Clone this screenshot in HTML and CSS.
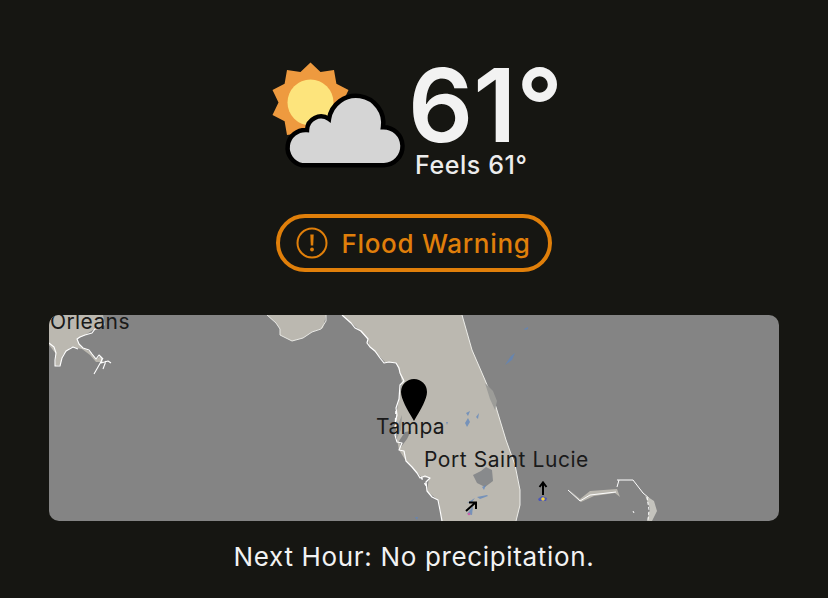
FILE: index.html
```html
<!DOCTYPE html>
<html lang="en">
 <head>
  <meta charset="utf-8">
  <meta name="viewport" content="width=device-width, initial-scale=1.0">
  <title>Weather</title>
  <link rel="stylesheet" href="styles.css">
 </head>
 <body>
  <div class="current">
   <svg class="wxicon" viewBox="268 60 140 112" width="140" height="112">
    <g transform="translate(309.500 102.500)">
     <polygon fill="#ee9a3f" points="0,-40 10,-30.500 23.500,-32.400 25.900,-18.800 38,-12.400 32,0 38,12.400 25.900,18.800 23.500,32.400 10,30.500 0,40 -10,30.500 -23.500,32.400 -25.900,18.800 -38,12.400 -32,0 -38,-12.400 -25.900,-18.800 -23.500,-32.400 -10,-30.500"/>
     <circle r="23" fill="#fde47c"/>
    </g>
    <path fill="#d5d5d5" stroke="#000" stroke-width="4.500" d="M301 165.200 H383 A19 19 0 0 0 382 127.200 A27.200 27.200 0 0 0 328 119 A14 14 0 0 0 306 130 A17.800 17.800 0 0 0 301 165.200 Z"/>
   </svg>
   <div class="temps">
    <div class="temp">61°</div>
    <div class="feels">Feels 61°</div>
   </div>
  </div>

  <div class="alert">
   <svg viewBox="0 0 32 32" width="32" height="32">
    <circle cx="16" cy="16" r="14.500" fill="none" stroke="#e07f0a" stroke-width="2"/>
    <path fill="#e07f0a" d="M14.300 7.500 h3.400 l-.5 11 h-2.400 z"/>
    <circle cx="16" cy="22.500" r="1.900" fill="#e07f0a"/>
   </svg>
   <span>Flood Warning</span>
  </div>

  <div class="map">
   <svg viewBox="0 0 730 206" width="730" height="206">
    <!-- louisiana -->
    <path fill="#bbb8b0" d="M0 0 H54 L56 10 L50 14 L44 15 L36 20 L28 24 L32 32 L42 37 L47 44 L52 41 L54 47 L47 47 L41 40 L33 34 L22 32 L14 40 L11 50 L6 51 L7 39 L0 30 Z"/>
    <path fill="none" stroke="#fff" stroke-width="1.100" stroke-linejoin="round" d="M52 13 L46 14 L43 18 L36 20 L31 22 L28 24 L30 29 L34 33 L40 35 L43 39 L47 44 L50 40 L53 43 L52 48 L59 46 L62 48 M54 43 L49 52 L45 59 M57 46 L54 54 M0 28 L5 32 L7 38 L6 45 L6 51 L11 51 L13 43 L17 36 L24 32 L29 34"/>
    <!-- panhandle -->
    <path fill="#bbb8b0" d="M218 0 L227 8 L231 14 L231 20 L243 26 L254 23 L263 17 L274 13 L277 0 Z"/>
    <path fill="none" stroke="#e8e8e4" stroke-width="1" d="M218 0 L227 8 L231 14 L231 20 L243 26 L254 23 L263 17 L272 14 L277 6 L277 0"/>
    <!-- peninsula -->
    <path fill="#bbb8b0" d="M293 0 L308 13 L319 24 L320 31 L336 47 L347 48 L351 58 L353 67 L350 84 L347 100 L347 120 L350 135 L357 146 L368 158 L372 162 L380 163 L378 176 L390 186 L393 206 H467 L471 190 L471 175 L466 150 L457 125 L447 92 L436 65 L423 35 L413 0 Z"/>
    <path fill="#848484" d="M350 126 L356 117 L362 116 L358 124 L352 132 Z"/>
    <path fill="none" stroke="#fff" stroke-width="1.200" stroke-linejoin="round" d="M293 0 L302 8 L306 13 L312 16 L319 24 L318 28 L321 32 L326 36 L331 43 L335 48 L340 47 L347 48 L350 53 L351 58 L355 66 L351 70 L350 84 L347 93 L348 100 L346 108 L349 112 L346 120 L348 127 L353 128 L350 135 L355 136 L357 146 L363 152 L368 158 L371 163 L376 161 L381 163 L377 167 L378 176 L383 182 L389 185 L391 195 L393 206"/>
    <path fill="none" stroke="#fff" stroke-width="1.500" stroke-dasharray="3 4" d="M347 96 L346 118 M372 162 L378 172"/>
    <path fill="none" stroke="#eeeeea" stroke-width="1" d="M413 0 L423 35 L436 65 L447 92 L457 125 L466 150 L471 175 L471 190 L467 206"/>
    <path fill="#9c9c99" d="M348 112 L353 100 L352 115 L347 125 Z"/>
    <path fill="#9c9c99" d="M436 68 L444 76 L448 86 L446 95 L441 84 Z"/>
    <!-- okeechobee -->
    <path fill="#888a8c" d="M424 160 L432 156 L437 152 L443 155 L444 166 L436 172 L428 168 Z"/>
    <!-- bahamas -->
    <path fill="#bbb8b0" d="M520 175 L531 184 L541 176 L568 174 L571 182 L566 178 L545 181 L532 187 Z"/>
    <path fill="none" stroke="#fff" stroke-width="1" d="M519 175 L531 186 L541 180 L567 177 M568 165 L584 165 L594 178 L600 183 M570 165 L568 172"/>
    <path fill="#c4c3bd" d="M596 180 L605 186 L608 196 L603 206 H598 L601 194 Z"/>
    <path fill="none" stroke="#fff" stroke-width="1" stroke-dasharray="3 2" d="M598 182 L600 195 L599 205 M584 196 L585 198"/>
    <!-- rain -->
    <g class="rain">
     <path d="M475 14 L479 12 L479 14 L476 15 Z"/>
     <path d="M456 50 L462 41 L466 38 L463 45 Z"/>
     <path d="M417 98 L421 96 L419 101 Z"/>
     <path d="M427 102 L430 98 L429 104 Z"/>
     <path d="M416 108 L419 103 L421 107 L418 112 Z"/>
     <path d="M397 107 L399 107 L398 110 Z"/>
     <path d="M433 172 L437 170 L435 175 Z"/>
     <path d="M428 182 L438 180 L439 181 L431 184 Z"/>
     <path d="M418 188 L426 183 L423 187 Z"/>
     <path d="M418 199 L424 191 L423 200 Z"/>
     <path d="M366 202 L369 202 L368 205 Z"/>
    </g>
    <path d="M489 184 L493 181 L498 183 L497 186 L490 186 Z" fill="#4b57b8"/>
    <circle cx="494" cy="184" r="1.800" fill="#f5d23c"/>
    <circle cx="420" cy="199" r="1.300" fill="#c861a8"/>
    <!-- storm arrows -->
    <g fill="none" stroke="#000" stroke-width="2">
     <path d="M417 196 L426 188 M420 187.500 H427 V194"/>
     <path d="M494 180 V168 M490.500 172 L494 167.500 L497.500 172"/>
    </g>
    <!-- pin -->
    <path fill="#000" d="M365 106 C358 94 352 84 352 77 A12.800 12.800 0 0 1 378 77 C378 84 372 94 365 106 Z"/>
   </svg>
   <span class="label orleans">Orleans</span>
   <span class="label tampa">Tampa</span>
   <span class="label lucie">Port Saint Lucie</span>
  </div>

  <div class="nexthour">Next Hour: No precipitation.</div>
 </body>
</html>
```

FILE: styles.css
```css
body {
 margin: 0;
 background-color: #161612;
 color: #f2f2f2;
 font-family: 'Inter', sans-serif;
 display: flex;
 flex-direction: column;
 align-items: center;
}

.current {
 display: flex;
 align-items: flex-start;
 padding-top: 54px;
 padding-left: 4px;
 height: 132px;
}

.wxicon {
 margin-top: 6px;
 margin-right: -1px;
}

.temp {
 font-size: 102px;
 font-weight: 600;
 line-height: 102px;
}

.feels {
 font-size: 25px;
 font-weight: 500;
 line-height: 26px;
 letter-spacing: 0.6px;
 margin-left: 7px;
 margin-top: -4px;
 color: #ececec;
}

.alert {
 display: flex;
 align-items: center;
 gap: 13px;
 margin-top: 28px;
 height: 50px;
 padding: 0 17px 0 16px;
 border: 4px solid #e07f0a;
 border-radius: 29px;
 color: #e07f0a;
 font-size: 26px;
 font-weight: 500;
 letter-spacing: 0.7px;
}

.map {
 position: relative;
 width: 730px;
 height: 206px;
 margin-top: 43px;
 border-radius: 10px;
 overflow: hidden;
 background-color: #848484;
}

.map svg {
 display: block;
}

.rain {
 fill: #5f86bd;
 opacity: 0.75;
}

.label {
 position: absolute;
 color: #1a1a1a;
 font-size: 21px;
 line-height: 24px;
}

.orleans {
 left: 1px;
 top: -5px;
 letter-spacing: 0.4px;
}

.tampa {
 left: 327px;
 top: 100px;
 letter-spacing: 0.4px;
}

.lucie {
 left: 375px;
 top: 133px;
 letter-spacing: 0.55px;
}

.nexthour {
 margin-top: 20px;
 font-size: 26px;
 line-height: 32px;
 letter-spacing: 0.66px;
}
```
